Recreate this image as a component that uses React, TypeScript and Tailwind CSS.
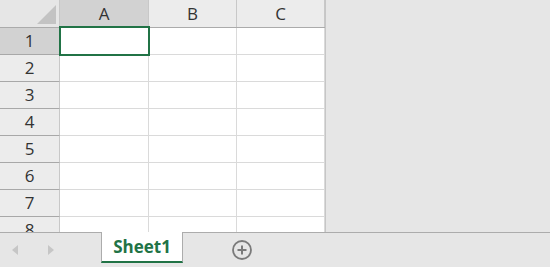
import React from 'react';

const cols = ['A', 'B', 'C'];
const colWidths = ['w-[89px]', 'w-[88px]', 'w-[88px]'];
const rows = [1, 2, 3, 4, 5, 6, 7, 8];

export default function App() {
  return (
    <div
      className="w-[550px] h-[267px] bg-[#e6e6e6] flex flex-col overflow-hidden"
      style={{ fontFamily: '"Open Sans", "Noto Sans", sans-serif' }}
    >
      {/* Grid area */}
      <div className="h-[232px] flex overflow-hidden">
        <div className="w-[326px] flex flex-col border-r border-[#c6c6c6]">
          {/* Column header row */}
          <div className="flex h-[28px] shrink-0 border-b border-[#ababab]">
            <div className="w-[60px] bg-[#e6e6e6] border-r border-[#c8c8c8] relative">
              <svg className="absolute right-[3px] bottom-[3px]" width="19" height="19" viewBox="0 0 19 19">
                <polygon points="19,0 19,19 0,19" fill="#c3c3c3" />
              </svg>
            </div>
            {cols.map((c, i) => (
              <div
                key={c}
                className={`${colWidths[i]} flex items-center justify-center text-[17px] text-[#333] border-r border-[#c8c8c8] ${
                  i === 0 ? 'bg-[#d2d2d2]' : 'bg-[#ececec]'
                }`}
              >
                {c}
              </div>
            ))}
          </div>

          {/* Rows */}
          {rows.map((r) => (
            <div key={r} className="flex h-[27px] shrink-0">
              <div
                className={`w-[60px] flex items-center justify-center text-[17px] text-[#333] border-r border-[#c8c8c8] border-b border-b-[#a8a8a8] ${
                  r === 1 ? 'bg-[#d2d2d2]' : 'bg-[#ececec]'
                }`}
              >
                {r}
              </div>
              {cols.map((c, i) => (
                <div
                  key={c}
                  className={`${colWidths[i]} bg-white border-r border-b border-[#dadada] ${r === 1 && i === 0 ? 'relative z-10' : ''}`}
                >
                  {r === 1 && i === 0 && (
                    <div className="absolute -left-px -top-[2px] w-[91px] h-[30px] border-2 border-[#217346]" />
                  )}
                </div>
              ))}
            </div>
          ))}
        </div>
        <div className="flex-1 bg-[#e6e6e6]" />
      </div>

      {/* Sheet tab bar */}
      <div className="h-[35px] flex relative">
        <div className="absolute left-0 top-0 w-[101px] h-px bg-[#acacac]" />
        <div className="absolute left-[183px] right-0 top-0 h-px bg-[#acacac]" />
        <div className="w-[101px] flex items-center pt-[1px]">
          <svg className="ml-[12px]" width="6" height="10" viewBox="0 0 6 10">
            <polygon points="6,0 6,10 0,5" fill="#c6c6c6" />
          </svg>
          <svg className="ml-[30px]" width="6" height="10" viewBox="0 0 6 10">
            <polygon points="0,0 0,10 6,5" fill="#c6c6c6" />
          </svg>
        </div>
        <div className="w-[82px] h-[31px] bg-white border-x border-[#acacac] border-b-2 border-b-[#217346] flex items-center justify-center">
          <span className="text-[17px] font-bold text-[#217346] leading-none pb-[1px]">Sheet1</span>
        </div>
        <div className="flex items-start pt-[7px] ml-[48px]">
          <svg width="22" height="22" viewBox="0 0 22 22">
            <circle cx="11" cy="11" r="9" fill="none" stroke="#7a7a7a" strokeWidth="1.8" />
            <line x1="11" y1="6.5" x2="11" y2="15.5" stroke="#7a7a7a" strokeWidth="2" />
            <line x1="6.5" y1="11" x2="15.5" y2="11" stroke="#7a7a7a" strokeWidth="2" />
          </svg>
        </div>
      </div>
    </div>
  );
}
